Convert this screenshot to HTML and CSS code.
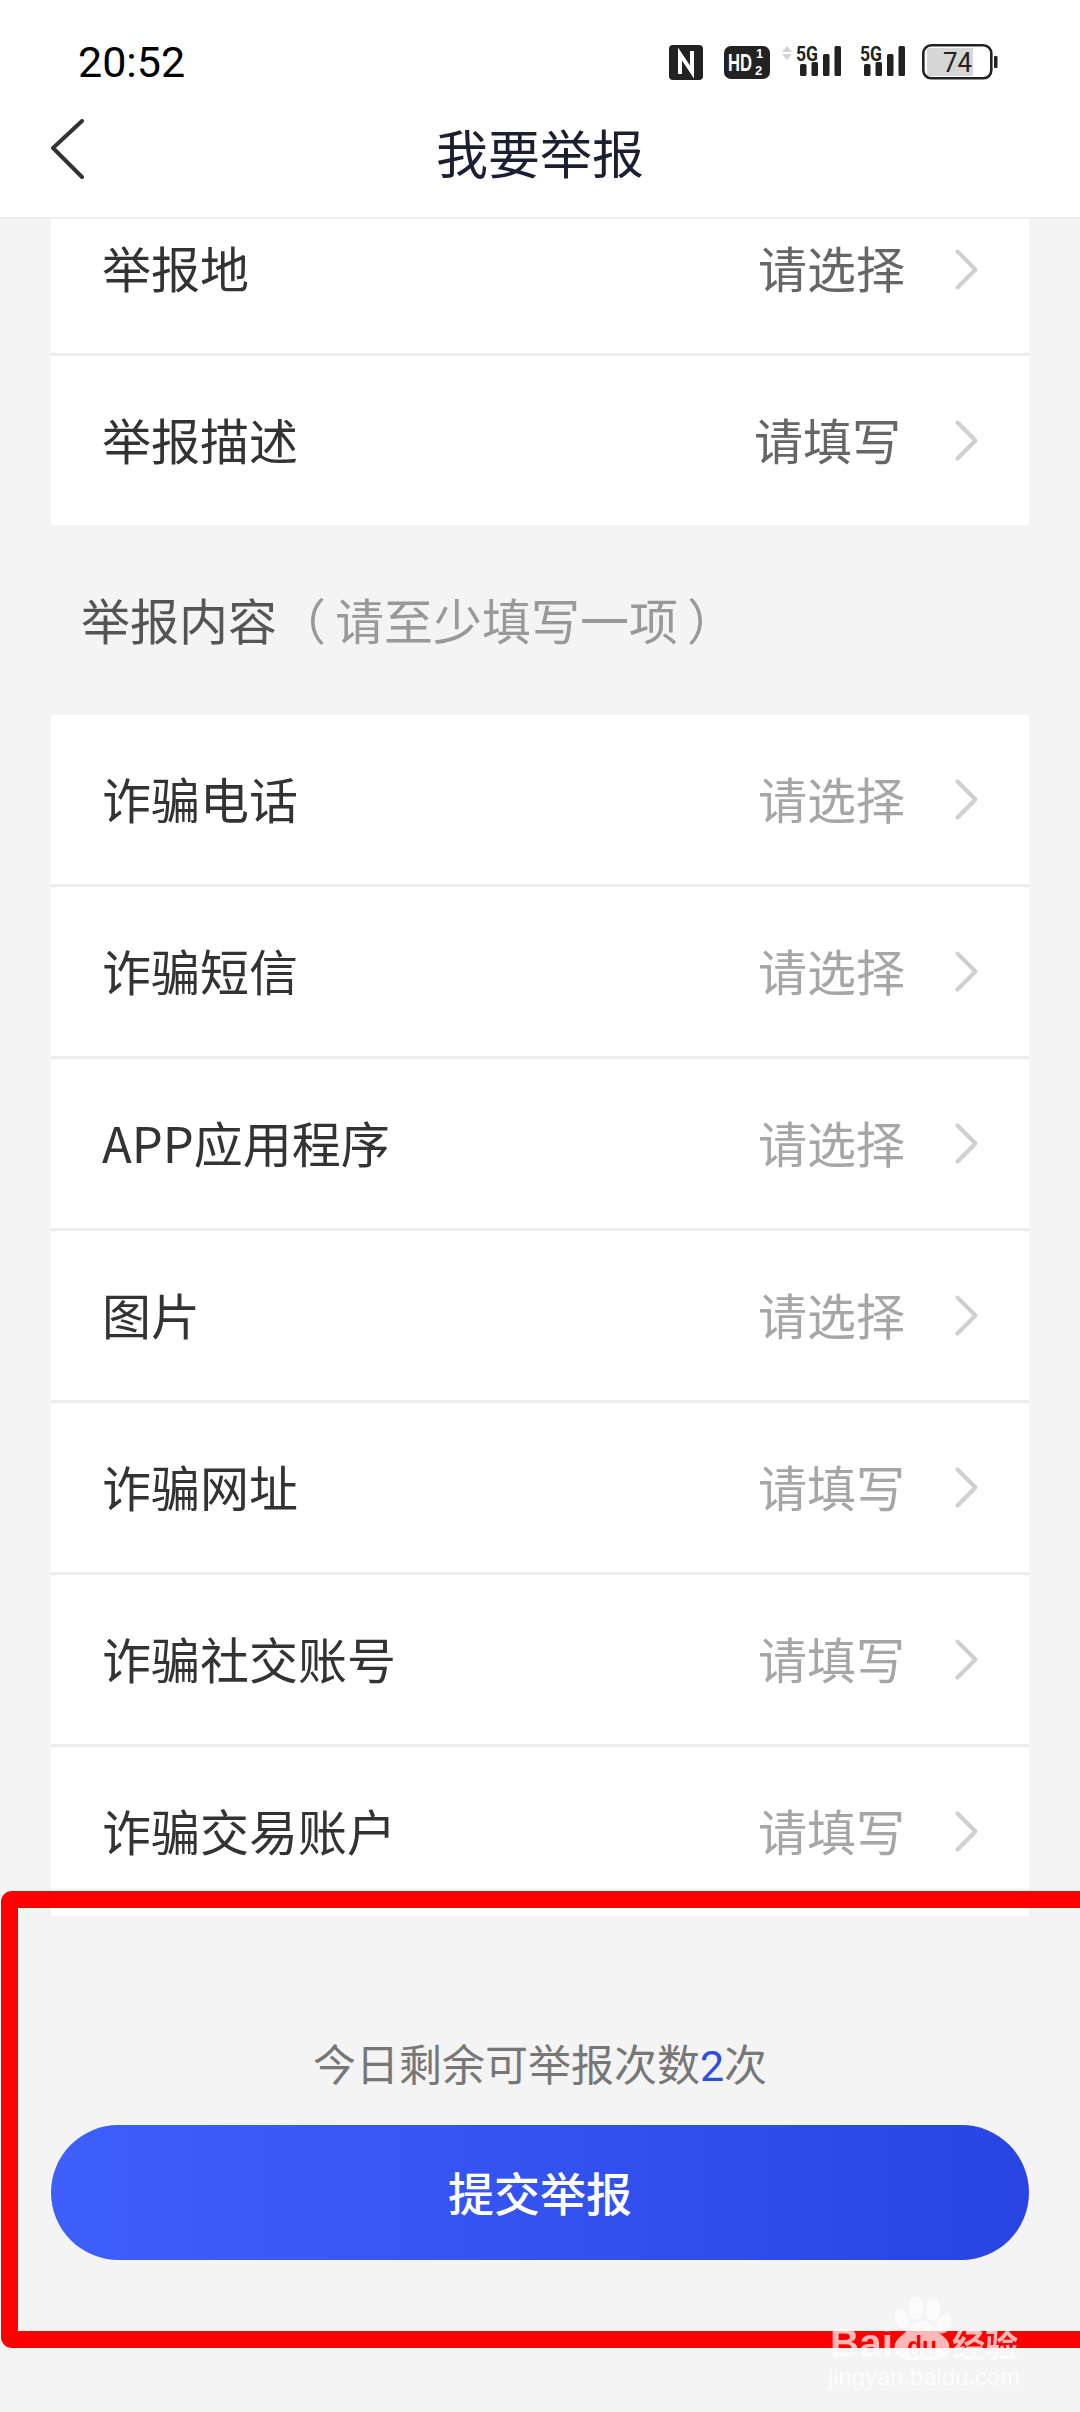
FILE: index.html
```html
<!DOCTYPE html>
<html lang="zh-CN">
<head>
<meta charset="utf-8">
<title>我要举报</title>
<link rel="stylesheet" href="styles.css">
</head>
<body>
<svg class="defs" width="0" height="0" aria-hidden="true">
  <symbol id="chev" viewBox="0 0 23 41"><polyline points="2.5,2.5 20.5,20.5 2.5,38.5" fill="none" stroke="#cfcfcf" stroke-width="4" stroke-linecap="round" stroke-linejoin="round"/></symbol>
  <symbol id="bars" viewBox="0 0 45 32">
    <rect x="4" y="18" width="6.5" height="12" rx="1.5" fill="#222"/>
    <rect x="15.5" y="16" width="6.5" height="14" rx="1.5" fill="#222"/>
    <rect x="27" y="8" width="6.5" height="22" rx="1.5" fill="#222"/>
    <rect x="38.5" y="0" width="6.5" height="30" rx="1.5" fill="#222"/>
  </symbol>
</svg>
<div class="phone">
  <header class="top">
    <div class="status">
      <span class="time">20:52</span>
      <div class="status-icons">
        <svg class="ic-nfc" width="34" height="35" viewBox="0 0 34 35">
          <rect width="34" height="35" rx="4" fill="#222"/>
          <path d="M11 29 V9 L23 27 V6" fill="none" stroke="#fff" stroke-width="4" stroke-linejoin="miter"/>
        </svg>
        <svg class="ic-hd" width="46" height="33" viewBox="0 0 46 33">
          <rect width="46" height="33" rx="7" fill="#222"/>
          <text x="4" y="25" class="hd-text" textLength="24" lengthAdjust="spacingAndGlyphs">HD</text>
          <text x="32" y="12" class="hd-frac">1</text>
          <text x="31" y="29" class="hd-frac">2</text>
        </svg>
        <svg class="ic-sig1" width="60" height="44" viewBox="0 -6 60 44">
          <polygon points="5,0 10,6 0,6" fill="#d4d4d4"/>
          <polygon points="5,14 10,8 0,8" fill="#d4d4d4"/>
          <use href="#bars" x="14" y="0" width="45" height="32"/>
          <text x="14" y="15" class="sig-text" textLength="22" lengthAdjust="spacingAndGlyphs">5G</text>
        </svg>
        <svg class="ic-sig2" width="45" height="44" viewBox="0 -6 45 44">
          <use href="#bars" width="45" height="32"/>
          <text x="0" y="15" class="sig-text" textLength="22" lengthAdjust="spacingAndGlyphs">5G</text>
        </svg>
        <svg class="ic-bat" width="76" height="36" viewBox="0 0 76 36">
          <rect x="5" y="4" width="46" height="28" fill="#d6d6d6"/>
          <rect x="1.3" y="1.3" width="68" height="33" rx="8" fill="none" stroke="#222" stroke-width="2.6"/>
          <rect x="72" y="12" width="3.5" height="12" rx="1" fill="#222"/>
          <text x="21" y="28" class="bat-text" textLength="29" lengthAdjust="spacingAndGlyphs">74</text>
        </svg>
      </div>
    </div>
    <nav class="nav">
      <svg class="back" width="34" height="60" viewBox="0 0 34 60"><polyline points="31,2 2,29 31,58" fill="none" stroke="#333" stroke-width="4" stroke-linecap="round" stroke-linejoin="round"/></svg>
      <h1 class="title">我要举报</h1>
    </nav>
  </header>

  <main class="scroll">
    <section class="card">
      <div class="row row-clipped">
        <span class="label">举报地</span>
        <span class="value value-dark">请选择</span>
        <svg class="chev"><use href="#chev"/></svg>
      </div>
      <div class="row row-end">
        <span class="label">举报描述</span>
        <span class="value value-dark value-shift">请填写</span>
        <svg class="chev"><use href="#chev"/></svg>
      </div>
    </section>

    <h2 class="section"><span>举报内容</span><span class="section-hint"><span>（</span><span class="hint-body">请至少填写一项</span><span>）</span></span></h2>

    <section class="card">
      <div class="row"><span class="label">诈骗电话</span><span class="value">请选择</span><svg class="chev"><use href="#chev"/></svg></div>
      <div class="row"><span class="label">诈骗短信</span><span class="value">请选择</span><svg class="chev"><use href="#chev"/></svg></div>
      <div class="row"><span class="label">APP应用程序</span><span class="value">请选择</span><svg class="chev"><use href="#chev"/></svg></div>
      <div class="row"><span class="label">图片</span><span class="value">请选择</span><svg class="chev"><use href="#chev"/></svg></div>
      <div class="row"><span class="label">诈骗网址</span><span class="value">请填写</span><svg class="chev"><use href="#chev"/></svg></div>
      <div class="row"><span class="label">诈骗社交账号</span><span class="value">请填写</span><svg class="chev"><use href="#chev"/></svg></div>
      <div class="row"><span class="label">诈骗交易账户</span><span class="value">请填写</span><svg class="chev"><use href="#chev"/></svg></div>
    </section>
  </main>

  <footer class="footer">
    <p class="quota">今日剩余可举报次数<span class="quota-num">2</span>次</p>
    <button class="submit" type="button">提交举报</button>
  </footer>

  <div class="red-frame"></div>

  <svg class="watermark" width="210" height="110" viewBox="0 0 210 110">
    <defs>
      <mask id="palm-mask">
        <rect width="210" height="110" fill="#fff"/>
        <text x="87" y="66" class="wm-du" textLength="30" lengthAdjust="spacingAndGlyphs">du</text>
      </mask>
    </defs>
    <g class="wm-paw">
      <ellipse cx="82" cy="28" rx="7" ry="10" transform="rotate(-20 82 28)"/>
      <ellipse cx="96" cy="17" rx="7.5" ry="11"/>
      <ellipse cx="113" cy="19" rx="7.5" ry="11"/>
      <ellipse cx="124" cy="33" rx="7" ry="10" transform="rotate(25 124 33)"/>
      <path d="M102 30 C112 30 116 40 124 46 C134 54 130 70 114 69 H90 C74 70 70 54 80 46 C88 40 92 30 102 30 Z" mask="url(#palm-mask)"/>
    </g>
    <text x="10" y="66" class="wm-bai" textLength="63" lengthAdjust="spacingAndGlyphs">Bai</text>
    <text x="132" y="66" class="wm-jy" textLength="66" lengthAdjust="spacingAndGlyphs">经验</text>
    <text x="8" y="94" class="wm-url" textLength="192" lengthAdjust="spacingAndGlyphs">jingyan.baidu.com</text>
  </svg>
</div>
</body>
</html>
```

FILE: styles.css
```css
* { box-sizing: border-box; }

html, body {
  margin: 0;
  padding: 0;
}

body {
  font-family: "Noto Sans CJK SC", "Noto Sans", sans-serif;
  background: #f4f4f4;
}

.defs { display: block; }

.phone {
  position: relative;
  width: 1080px;
  height: 2412px;
  display: flex;
  flex-direction: column;
  overflow: hidden;
  background: #f4f4f4;
}

/* header */
.top {
  flex: none;
  background: #fff;
  border-bottom: 2px solid #eeeeee;
}

.status {
  height: 93px;
  padding: 31px 82px 0 78px;
  display: flex;
  align-items: center;
  justify-content: space-between;
}

.time {
  font-family: Roboto, sans-serif;
  font-size: 43px;
  line-height: 50px;
  color: #000;
}

.status-icons {
  display: flex;
  align-items: center;
}

.ic-nfc { margin-right: 21px; }
.ic-hd { margin-right: 12px; }
.ic-sig1 { margin-right: 18px; }
.ic-sig2 { margin-right: 17px; }

.sig-text {
  font-family: Roboto, sans-serif;
  font-weight: 700;
  font-size: 21px;
  fill: #222;
}

.hd-text {
  font-family: "Liberation Sans", sans-serif;
  font-weight: 700;
  font-size: 24px;
  fill: #fff;
}

.hd-frac {
  font-family: "Liberation Sans", sans-serif;
  font-weight: 700;
  font-size: 13px;
  fill: #fff;
}

.bat-text {
  font-family: Roboto, sans-serif;
  font-size: 28px;
  fill: #222;
}

.nav {
  height: 124px;
  padding-bottom: 6px;
  display: flex;
  position: relative;
  justify-content: center;
  align-items: center;
}

.back {
  position: absolute;
  left: 51px;
  top: 26px;
}

.title {
  margin: 0;
  font-size: 52px;
  line-height: 70px;
  font-weight: 400;
  color: #1e1e33;
}

/* list */
.scroll {
  flex: 1;
  min-height: 0;
  overflow: hidden;
}

.card {
  margin: 0 51px;
  background: #fff;
}

.row {
  height: 172px;
  padding: 0 51px 0 51px;
  border-bottom: 3px solid #ebecf0;
  display: flex;
  align-items: center;
}

.row-clipped {
  height: 137px;
  padding-bottom: 34px;
}

.row-end {
  height: 169px;
  border-bottom: 0;
}

.label {
  flex: 1;
  padding-bottom: 4px;
  font-size: 49px;
  line-height: 64px;
  color: #333;
}

.value {
  padding-bottom: 4px;
  font-size: 49px;
  line-height: 64px;
  color: #a6a6a6;
}

.value-dark { color: #666; }
.value-shift { margin-right: 4px; }

.chev {
  flex: none;
  width: 23px;
  height: 41px;
  margin-left: 50px;
}

.section {
  margin: 0;
  height: 190px;
  padding: 0 0 2px 81px;
  display: flex;
  align-items: center;
  font-size: 49px;
  line-height: 64px;
  font-weight: 400;
  color: #555;
}

.section-hint { color: #999; }
.hint-body { padding: 0 9px; }

/* footer */
.footer {
  flex: none;
  height: 496px;
  padding: 116px 51px 0;
  background: #f4f4f4;
}

.quota {
  height: 60px;
  margin: 0 0 33px;
  font-size: 43px;
  line-height: 60px;
  text-align: center;
  color: #777;
}

.quota-num {
  color: #2f4fe0;
  font-family: Roboto, sans-serif;
}

.submit {
  display: block;
  width: 100%;
  height: 135px;
  padding: 0 0 3px;
  border: 0;
  border-radius: 68px;
  background: linear-gradient(90deg, #3f5ffd 0%, #2845e3 100%);
  color: #fff;
  font-family: "Noto Sans CJK SC", sans-serif;
  font-size: 46px;
  font-weight: 500;
}

/* annotation overlay */
.red-frame {
  position: absolute;
  left: 1px;
  top: 1891px;
  width: 1120px;
  height: 457px;
  border: 17px solid #ff0000;
  border-radius: 11px;
}

.watermark {
  position: absolute;
  left: 820px;
  top: 2291px;
}

.wm-paw { fill: #fff; opacity: 0.72; }

.wm-du {
  font-family: "Liberation Sans", sans-serif;
  font-weight: 700;
  font-size: 30px;
  fill: #000;
}

.wm-bai {
  font-family: "Liberation Sans", sans-serif;
  font-weight: 700;
  font-size: 40px;
  fill: #fff;
  opacity: 0.72;
}

.wm-jy {
  font-family: "Noto Sans CJK SC", sans-serif;
  font-weight: 700;
  font-size: 32px;
  fill: #fff;
  opacity: 0.72;
}

.wm-url {
  font-family: "Liberation Sans", sans-serif;
  font-size: 24px;
  fill: #fff;
  opacity: 0.8;
}
```
